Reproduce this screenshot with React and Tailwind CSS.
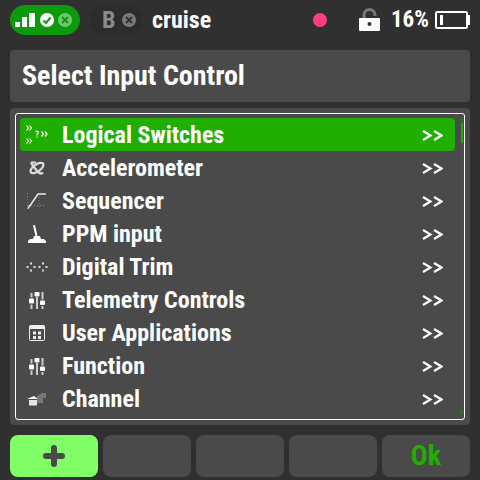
import React from 'react';

const Font = "font-['Roboto',sans-serif]";

const Icons = {
  logical: (
    <svg width="22" height="20" viewBox="0 0 22 20" fill="none" stroke="#fff" strokeWidth="1.100">
      <path d="M0.500 0.500l2 2.500-2 2.500M3.500 0.500l2 2.500-2 2.500M0.500 13.500l2 2.500-2 2.500M3.500 13.500l2 2.500-2 2.500" />
      <path d="M15.500 6.500l2 2.500-2 2.500M19 6.500l2 2.500-2 2.500" strokeWidth="1.300" />
      <path d="M9.500 7q1.500-1.500 2.700-.3q.6 1.500-1.200 2.500v1.300M11 11.500v1.200" />
    </svg>
  ),
  accel: (
    <svg width="18" height="16" viewBox="0 0 18 16" fill="none" stroke="#ddd" strokeWidth="2.200">
      <ellipse cx="9" cy="8" rx="7.500" ry="3.500" transform="rotate(-35 9 8)" />
      <path d="M3 2.500l2 3.500 5.500 6.500q3 2 4.500 0" />
      <path d="M3 2.500h5" />
    </svg>
  ),
  seq: (
    <svg width="20" height="16" viewBox="0 0 20 16" fill="none">
      <path d="M1 15.500L11 1h8" stroke="#e8e8e8" strokeWidth="1.500" />
      <path d="M0.500 0v16M1 12.500h18M12 4v12" stroke="#8a8a8a" strokeWidth="1" strokeDasharray="1 2" />
    </svg>
  ),
  ppm: (
    <svg width="20" height="18" viewBox="0 0 20 18" fill="#fff">
      <path d="M6 0.500l2-.5 2.500 11H13l1 3h3l2 2v2H1v-2l2-2h3l1-3h1.500z" />
    </svg>
  ),
  trim: (
    <svg width="22" height="10" viewBox="0 0 22 10" fill="#ddd">
      <rect x="4" y="0.500" width="2" height="2" />
      <rect x="0.500" y="4" width="2" height="2" />
      <rect x="7.500" y="4" width="2" height="2" />
      <rect x="4" y="7.500" width="2" height="2" />
      <rect x="16" y="0.500" width="2" height="2" />
      <rect x="12.500" y="4" width="2" height="2" />
      <rect x="19.500" y="4" width="2" height="2" />
      <rect x="16" y="7.500" width="2" height="2" />
    </svg>
  ),
  mixer: (
    <svg width="16" height="17" viewBox="0 0 16 17" fill="#fff">
      <rect x="1.500" y="1" width="2" height="4.500" fill="#ccc" />
      <rect x="0" y="6.500" width="5" height="5" rx="1" />
      <rect x="1.500" y="12.500" width="2" height="4.500" fill="#ccc" />
      <rect x="7" y="5" width="2" height="12" fill="#ccc" />
      <rect x="5.500" y="0" width="5" height="4.500" rx="1" />
      <rect x="12.500" y="0" width="2" height="7.500" fill="#ccc" />
      <rect x="11" y="8.500" width="5" height="4.500" rx="1" />
      <rect x="12.500" y="14" width="2" height="3" fill="#ccc" />
    </svg>
  ),
  apps: (
    <svg width="16" height="16" viewBox="0 0 16 16" fill="none">
      <rect x="0.500" y="0.500" width="15" height="15" rx="1" stroke="#eee" strokeWidth="1" />
      <rect x="0.500" y="0.500" width="15" height="3.500" fill="#eee" />
      <path d="M4 6.500h3v3H4zM9 6.500h3v3H9zM4 11h3v3H4zM9 11h3v3H9z" fill="#eee" />
    </svg>
  ),
  channel: (
    <svg width="20" height="13" viewBox="0 0 20 13" fill="none">
      <path d="M10 3l5-3h4v5h-3v5h-6z" fill="#777" />
      <path d="M0 6l7-3 4 3z" fill="#fff" />
      <rect x="2" y="7" width="8" height="5.500" fill="#e4e4e4" />
    </svg>
  ),
};

const rows = [
  ['Logical Switches', Icons.logical],
  ['Accelerometer', Icons.accel],
  ['Sequencer', Icons.seq],
  ['PPM input', Icons.ppm],
  ['Digital Trim', Icons.trim],
  ['Telemetry Controls', Icons.mixer],
  ['User Applications', Icons.apps],
  ['Function', Icons.mixer],
  ['Channel', Icons.channel],
];

const Arrows = () => (
  <svg width="21" height="11" viewBox="0 0 21 11" fill="none" stroke="#fff" strokeWidth="2.200">
    <path d="M1 1l7.500 4.500L1 10M12 1l7.500 4.500L12 10" />
  </svg>
);

const StatusDot = ({ ok, dim }) => (
  <span className={`flex h-[14px] w-[14px] shrink-0 items-center justify-center rounded-full ${dim ? 'bg-[#7a7a7a]' : ok ? 'bg-white' : 'bg-[#6fc86f]'}`}>
    <svg width="10" height="10" viewBox="0 0 10 10" fill="none" strokeWidth="2" stroke={dim ? '#303030' : '#0c9a0c'}>
      {ok ? <path d="M1.500 5.500L4 8l4.500-5.500" /> : <path d="M2 2l6 6M8 2l-6 6" />}
    </svg>
  </span>
);

export default function App() {
  return (
    <div className={`flex h-[480px] w-[480px] flex-col overflow-hidden bg-[#303030] px-[10px] ${Font}`}>
      {/* Status bar */}
      <div className="flex h-[50px] shrink-0 items-start pt-[5px]">
        <div className="flex h-[30px] w-[70px] shrink-0 items-center rounded-full bg-[#0c9a0c] pl-[5px]">
          <span className="mr-[5px] flex items-end gap-[2px]">
            <span className="h-[5px] w-[5px] bg-white" />
            <span className="h-[10px] w-[5px] bg-white" />
            <span className="h-[14px] w-[6px] rounded-t-[1px] bg-white" />
          </span>
          <span className="flex gap-[4px]">
            <StatusDot ok />
            <StatusDot />
          </span>
        </div>
        <div className="ml-[10px] flex h-[30px] w-[52px] shrink-0 items-center rounded-full bg-[#2c2c2c] pl-[12px]">
          <span className="w-[20px] text-[24px] font-bold text-[#8a8a8a] [font-stretch:condensed]">B</span>
          <StatusDot dim />
        </div>
        <span className="ml-[10px] flex h-[30px] items-center text-[24px] font-bold text-white [font-stretch:condensed]">cruise</span>
        <div className="ml-auto flex shrink-0 items-start">
          <span className="mt-[8px] h-[14px] w-[14px] rounded-full bg-[#ff3d7f]" />
          <svg className="ml-[32px] mt-[2px]" width="21" height="25" viewBox="0 0 21 25">
            <path d="M5 12V8a5.500 5.500 0 0 1 11 0v1" fill="none" stroke="#777" strokeWidth="3" />
            <path d="M1 11h19a1 1 0 0 1 1 1v11a1 1 0 0 1-1 1H1a1 1 0 0 1-1-1V12a1 1 0 0 1 1-1z" fill="#fff" />
            <circle cx="10.500" cy="17" r="2" fill="#303030" />
          </svg>
          <span className="ml-[11px] flex h-[30px] w-[37px] items-center text-[23px] font-bold text-white [font-stretch:condensed]">16%</span>
          <div className="ml-[7px] mt-[6px] flex items-center">
            <div className="flex h-[18px] w-[33px] items-center rounded-[2px] border-[2px] border-white pl-[3px]">
              <span className="h-[10px] w-[3px] bg-white" />
            </div>
            <span className="h-[10px] w-[2px] bg-white" />
          </div>
        </div>
      </div>

      {/* Title */}
      <div className="flex h-[52px] shrink-0 items-center rounded-[4px] bg-[#4a4a4a] px-[12px]">
        <span className="text-[28px] font-bold text-white [font-stretch:condensed]">Select Input Control</span>
      </div>

      {/* List */}
      <div className="mt-[6px] h-[317px] shrink-0 rounded-[4px] bg-[#4a4a4a] p-[5px]">
        <div className="relative flex h-full flex-col rounded-[3px] border border-white py-[4px] pl-[4px] pr-[9px]">
          {rows.map(([label, icon], i) => (
            <div
              key={label}
              className={`flex h-[33px] shrink-0 items-center rounded-[4px] pt-[1px] ${i === 0 ? 'bg-[#20ae00]' : ''}`}
            >
              <span className="flex w-[34px] shrink-0 justify-center">{icon}</span>
              <span className="ml-[8px] flex-1 text-[24px] font-bold text-white [font-stretch:condensed]">{label}</span>
              <span className="mr-[12px] flex"><Arrows /></span>
            </div>
          ))}
          {/* Scroll bar */}
          <div className="absolute right-[2px] top-[4px] h-[297px] w-[1px] bg-[#2f6e22]" />
          <div className="absolute right-[1px] top-[9px] h-[20px] w-[2px] bg-[#20ae00]" />
          <div className="absolute right-[1px] top-[4px] h-[4px] w-[3px] bg-[#2f6e22]" />
          <div className="absolute right-[1px] top-[296px] h-[4px] w-[3px] bg-[#2f6e22]" />
        </div>
      </div>

      {/* Buttons */}
      <div className="mt-[10px] grid h-[40px] shrink-0 grid-cols-5 gap-[5px]">
        <div className="flex items-center justify-center rounded-[8px] bg-[#80ff66]">
          <svg width="22" height="22" viewBox="0 0 22 22" fill="none" stroke="#4a4a4a" strokeWidth="6" strokeLinecap="round">
            <path d="M11 3v16M3 11h16" />
          </svg>
        </div>
        <div className="rounded-[8px] bg-[#4a4a4a]" />
        <div className="rounded-[8px] bg-[#4a4a4a]" />
        <div className="rounded-[8px] bg-[#4a4a4a]" />
        <div className="flex items-center justify-center rounded-[8px] bg-[#4a4a4a]">
          <span className="text-[28px] font-bold text-[#20ae00] [font-stretch:condensed]">Ok</span>
        </div>
      </div>
    </div>
  );
}
